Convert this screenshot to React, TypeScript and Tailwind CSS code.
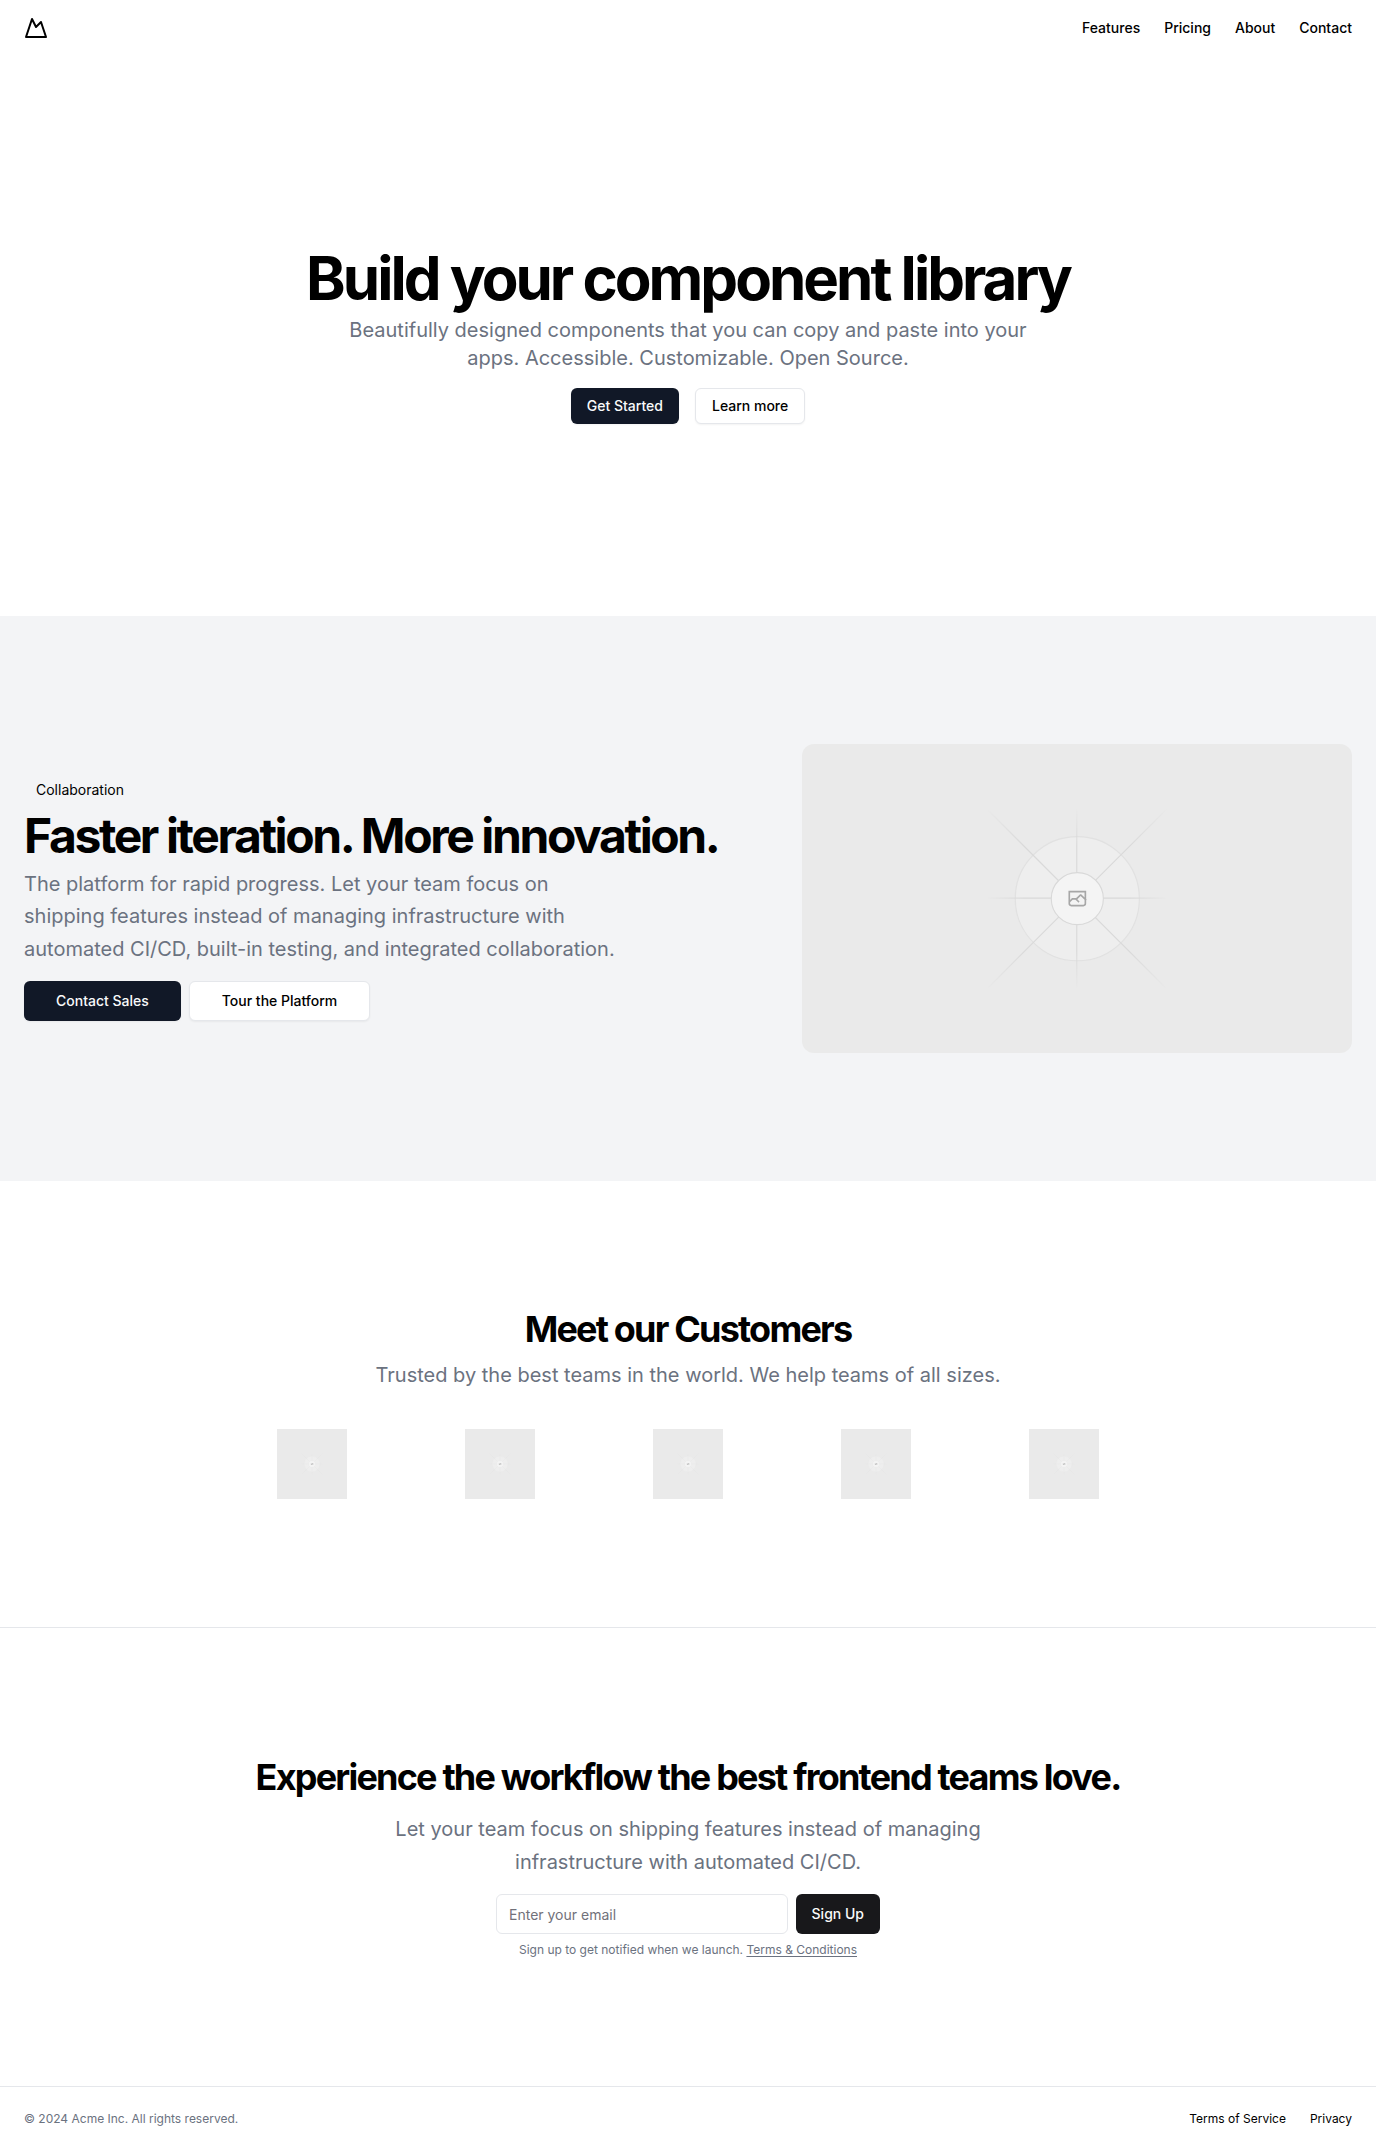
import { useId } from "react";
import { Mountain } from "lucide-react";

const navLinks = ["Features", "Pricing", "About", "Contact"];
const customers = ["Customer 1", "Customer 2", "Customer 3", "Customer 4", "Customer 5"];

function FadeStops() {
  return (
    <>
      <stop stopColor="#C9C9C9" stopOpacity="0" />
      <stop offset=".208" stopColor="#C9C9C9" />
      <stop offset=".792" stopColor="#C9C9C9" />
      <stop offset="1" stopColor="#C9C9C9" stopOpacity="0" />
    </>
  );
}

function Placeholder({ className, label }: { className: string; label: string }) {
  const id = useId();
  const lines = [
    { x1: 404.3, y1: 796, x2: 795.7, y2: 404.6 },
    { x1: 404.8, y1: 598.67, x2: 796.6, y2: 598.68 },
    { x1: 599.5, y1: 404, x2: 599.51, y2: 795.7 },
    { x1: 404.3, y1: 405.2, x2: 795.7, y2: 796.6 },
  ];
  return (
    <svg
      role="img"
      aria-label={label}
      viewBox="0 0 1200 1200"
      preserveAspectRatio="xMidYMid slice"
      fill="none"
      className={className}
    >
      <defs>
        {lines.map((l, i) => (
          <linearGradient key={i} id={`${id}-${i}`} gradientUnits="userSpaceOnUse" {...l}>
            <FadeStops />
          </linearGradient>
        ))}
      </defs>
      <rect width="1200" height="1200" fill="#EAEAEA" />
      <g opacity=".5">
        <g opacity=".5">
          <circle cx="600.7" cy="599.9" r="136.6" fill="#FAFAFA" />
          <circle cx="600.7" cy="599.9" r="135.4" stroke="#C9C9C9" strokeWidth="2.418" />
        </g>
        {lines.map((l, i) => (
          <line key={i} {...l} stroke={`url(#${id}-${i})`} strokeWidth="2.418" />
        ))}
        <circle cx="600.7" cy="599.9" r="56.8" fill="#fff" />
        <path
          fill="#666"
          fillRule="evenodd"
          clipRule="evenodd"
          d="M616.426 586.58h-31.434v16.176l3.553-3.554.531-.531h9.068l.074-.074 8.463-8.463h2.565l7.18 7.181V586.58Zm-15.715 14.654 3.698 3.699 1.283 1.282-2.565 2.565-1.282-1.283-5.2-5.199h-6.066l-5.514 5.514-.073.073v2.876a2.418 2.418 0 0 0 2.418 2.418h26.598a2.418 2.418 0 0 0 2.418-2.418v-8.317l-8.463-8.463-7.181 7.181-.071.072Zm-19.347 5.442v4.085a6.045 6.045 0 0 0 6.046 6.045h26.598a6.044 6.044 0 0 0 6.045-6.045v-7.108l1.356-1.355-1.282-1.283-.074-.073v-17.989h-38.689v23.43l-.146.146.146.147Z"
        />
        <circle cx="600.7" cy="599.9" r="56.8" stroke="#C9C9C9" strokeWidth="2.418" />
      </g>
    </svg>
  );
}

const darkButton =
  "inline-flex items-center justify-center rounded-md bg-[#111827] text-sm font-medium text-gray-50 shadow-xs";
const lightButton =
  "inline-flex items-center justify-center rounded-md border border-[#e5e7eb] bg-white text-sm font-medium text-black shadow-xs";

export default function App() {
  return (
    <div className="flex flex-col bg-white font-['Inter',sans-serif] text-black">
      <header className="flex h-14 items-center px-6">
        <a href="#" aria-label="Acme Inc">
          <Mountain className="size-6" />
        </a>
        <nav className="ml-auto flex gap-6">
          {navLinks.map((link) => (
            <a key={link} href="#" className="text-sm font-medium">
              {link}
            </a>
          ))}
        </nav>
      </header>

      <main>
        <section className="px-6 py-48">
          <div className="flex flex-col items-center gap-4 text-center">
            <div className="flex flex-col items-center gap-2">
              <h1 className="text-6xl leading-none font-bold tracking-tighter">
                Build your component library
              </h1>
              <p className="max-w-[700px] text-xl leading-7 text-[#6b7280]">
                Beautifully designed components that you can copy and paste into your apps. Accessible.
                Customizable. Open Source.
              </p>
            </div>
            <div className="flex gap-4">
              <button type="button" className={`${darkButton} h-9 px-4`}>
                Get Started
              </button>
              <button type="button" className={`${lightButton} h-9 px-4`}>
                Learn more
              </button>
            </div>
          </div>
        </section>

        <section className="bg-[#f3f4f6] px-6 py-32">
          <div className="grid grid-cols-[1fr_550px] items-center gap-12">
            <div className="flex flex-col gap-4">
              <div className="flex flex-col items-start gap-2">
                <div className="rounded-lg px-3 py-1 text-sm">Collaboration</div>
                <h2 className="text-5xl leading-none font-bold tracking-tighter">
                  Faster iteration. More innovation.
                </h2>
                <p className="max-w-[600px] text-xl leading-relaxed text-[#6b7280]">
                  The platform for rapid progress. Let your team focus on shipping features instead of
                  managing infrastructure with automated CI/CD, built-in testing, and integrated
                  collaboration.
                </p>
              </div>
              <div className="flex gap-2">
                <button type="button" className={`${darkButton} h-10 px-8`}>
                  Contact Sales
                </button>
                <button type="button" className={`${lightButton} h-10 px-8`}>
                  Tour the Platform
                </button>
              </div>
            </div>
            <Placeholder label="Product preview" className="aspect-video w-full rounded-xl" />
          </div>
        </section>

        <section className="px-6 py-32">
          <div className="flex flex-col items-center gap-10 text-center">
            <div className="flex flex-col gap-3">
              <h2 className="text-4xl font-bold tracking-tighter">Meet our Customers</h2>
              <p className="text-xl leading-7 text-[#6b7280]">
                Trusted by the best teams in the world. We help teams of all sizes.
              </p>
            </div>
            <div className="grid w-full max-w-[940px] grid-cols-5 justify-items-center">
              {customers.map((name) => (
                <Placeholder key={name} label={name} className="size-[70px]" />
              ))}
            </div>
          </div>
        </section>

        <section className="border-t border-[#e5e7eb] px-6 pt-[129px] pb-32">
          <div className="flex flex-col items-center gap-4 text-center">
            <h2 className="text-4xl font-bold tracking-tighter">
              Experience the workflow the best frontend teams love.
            </h2>
            <p className="max-w-[600px] text-xl leading-relaxed text-[#6b7280]">
              Let your team focus on shipping features instead of managing infrastructure with automated
              CI/CD.
            </p>
            <div className="flex w-full max-w-sm flex-col gap-2">
              <form className="flex gap-2" onSubmit={(e) => e.preventDefault()}>
                <input
                  type="email"
                  aria-label="Email"
                  placeholder="Enter your email"
                  className="h-10 min-w-0 flex-1 rounded-md border border-[#e5e7eb] bg-white px-3 text-sm placeholder:text-[#71717a]"
                />
                <button
                  type="submit"
                  className="h-10 rounded-md bg-[#18181b] px-4 text-sm font-medium text-[#fafafa]"
                >
                  Sign Up
                </button>
              </form>
              <p className="text-xs text-[#6b7280]">
                Sign up to get notified when we launch.{" "}
                <a href="#" className="underline underline-offset-2">
                  Terms &amp; Conditions
                </a>
              </p>
            </div>
          </div>
        </section>
      </main>

      <footer className="flex items-center border-t border-[#e5e7eb] px-6 py-6 text-xs">
        <p className="text-[#6b7280]">© 2024 Acme Inc. All rights reserved.</p>
        <nav className="ml-auto flex gap-6">
          <a href="#">Terms of Service</a>
          <a href="#">Privacy</a>
        </nav>
      </footer>
    </div>
  );
}
